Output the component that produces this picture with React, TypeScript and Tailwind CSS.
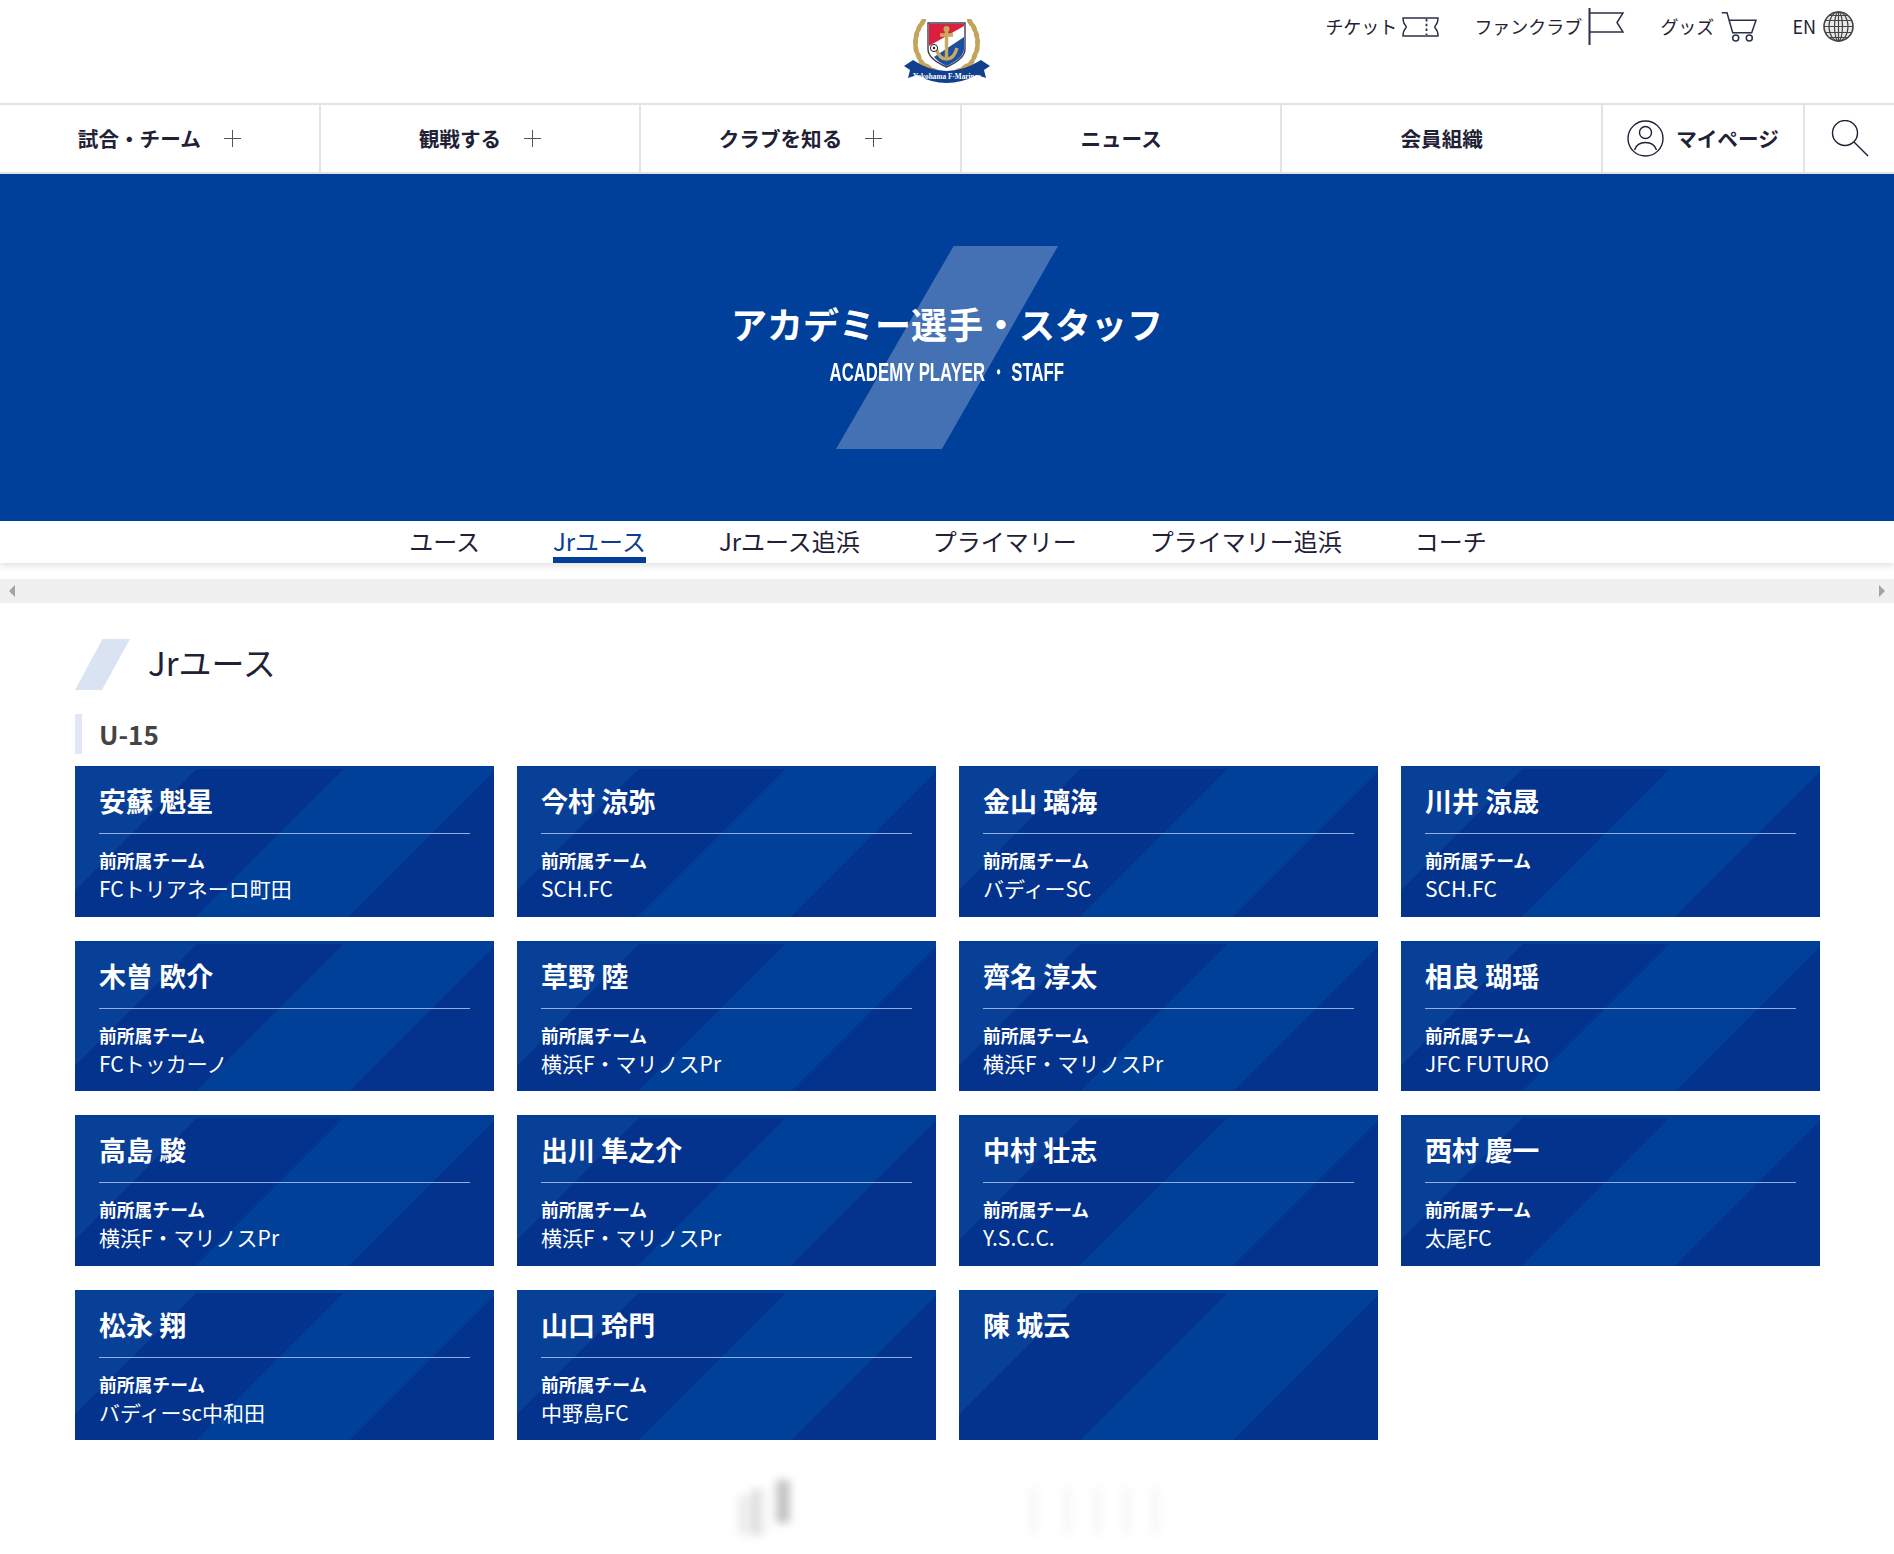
const players = [
  { name: "安蘇 魁星", team: "FCトリアネーロ町田" },
  { name: "今村 涼弥", team: "SCH.FC" },
  { name: "金山 璃海", team: "バディーSC" },
  { name: "川井 涼晟", team: "SCH.FC" },
  { name: "木曽 欧介", team: "FCトッカーノ" },
  { name: "草野 陸", team: "横浜F・マリノスPr" },
  { name: "齊名 淳太", team: "横浜F・マリノスPr" },
  { name: "相良 瑚瑶", team: "JFC FUTURO" },
  { name: "高島 駿", team: "横浜F・マリノスPr" },
  { name: "出川 隼之介", team: "横浜F・マリノスPr" },
  { name: "中村 壮志", team: "Y.S.C.C." },
  { name: "西村 慶一", team: "太尾FC" },
  { name: "松永 翔", team: "バディーsc中和田" },
  { name: "山口 玲門", team: "中野島FC" },
  { name: "陳 城云", team: "" },
];

const tabs = ["ユース", "Jrユース", "Jrユース追浜", "プライマリー", "プライマリー追浜", "コーチ"];

const navItems = [
  { label: "試合・チーム", plus: true },
  { label: "観戦する", plus: true },
  { label: "クラブを知る", plus: true },
  { label: "ニュース", plus: false },
  { label: "会員組織", plus: false },
];

const leaves = [
  [12, 44, -35], [8.5, 37, -20], [6, 30, -10], [5.5, 23, 0], [6.5, 16, 12], [9, 9, 22], [12.5, 3.500, 30],
  [18, 48, -55], [25, 52, -65], [32, 55, -75],
];

function Logo() {
  return (
    <svg width="90" height="68" viewBox="0 0 90 68" className="mt-[19px]">
      {leaves.map(([x, y, r], i) => (
        <g key={i}>
          <ellipse cx={x + 8} cy={y} rx="2.500" ry="5" fill="#c2a45c" transform={`rotate(${r} ${x + 8} ${y})`} />
          <ellipse cx={81 - x} cy={y} rx="2.500" ry="5" fill="#c2a45c" transform={`rotate(${-r} ${81 - x} ${y})`} />
        </g>
      ))}
      <path d="M26 4H63V30Q63 40 44.500 48Q26 40 26 30Z" fill="#fff" stroke="#3c3f55" strokeWidth="1.400" />
      <path d="M27 5H62V7L27 27Z" fill="#dc1f3c" />
      <path d="M62 18V30Q62 39 44.500 47Q36 43 32 38Z" fill="#1c4f9f" />
      <path d="M44.500 11V38M38 16H51M34 29Q37 40 44.500 40Q52 40 55 29" stroke="#c9a961" strokeWidth="3.400" fill="none" />
      <circle cx="44.500" cy="10" r="3" fill="#c9a961" />
      <circle cx="32" cy="29" r="3.600" fill="#fff" stroke="#222" strokeWidth="1" />
      <circle cx="32" cy="29" r="1.200" fill="#222" />
      <path d="M2 47L11 41Q44 63 79 41L88 47L82 51L84 59L75 56Q44 72 15 56L6 59L8 51Z" fill="#12408f" />
      <text
        x="45"
        y="60"
        textAnchor="middle"
        fontSize="8.500"
        fontWeight="700"
        fill="#fff"
        fontFamily="'Liberation Serif', serif"
        textLength="68"
        lengthAdjust="spacingAndGlyphs"
      >
        Yokohama F·Marinos
      </text>
    </svg>
  );
}

function Ticket() {
  return (
    <svg width="37" height="20" viewBox="0 0 37 20" fill="none" stroke="#2a3048" strokeWidth="1.400">
      <path d="M1 1H36Q36 6 33.500 8.500Q32 10 33.500 11.500Q36 14 36 19H1Q1 14 3.500 11.500Q5 10 3.500 8.500Q1 6 1 1Z" />
      <path d="M24.500 2V18" strokeDasharray="2.400 2.400" strokeWidth="1.800" />
    </svg>
  );
}

function Flag() {
  return (
    <svg width="36" height="37" viewBox="0 0 36 37" fill="none" stroke="#2a3048" strokeWidth="1.500">
      <path d="M1.500 0V37" strokeWidth="2" />
      <path d="M1.500 5H35L29 14.500L35 24H1.500" />
    </svg>
  );
}

function Cart() {
  return (
    <svg width="38" height="32" viewBox="0 0 38 32" fill="none" stroke="#2a3048" strokeWidth="1.500">
      <path d="M1.700 1.700H7L12.700 21.700H31.700L36 9.300H8.300" />
      <circle cx="15.700" cy="27" r="3" />
      <circle cx="29.300" cy="27" r="3" />
    </svg>
  );
}

function Globe() {
  return (
    <svg width="31" height="31" viewBox="0 0 31 31" fill="#e9e9e9" stroke="#444" strokeWidth="1.200">
      <circle cx="15.500" cy="15.500" r="14.500" strokeWidth="1.600" />
      <ellipse cx="15.500" cy="15.500" rx="4" ry="14.500" fill="none" />
      <ellipse cx="15.500" cy="15.500" rx="9.500" ry="14.500" fill="none" />
      <path d="M15.500 1V30M2 9.500H29M1 15.500H30M2 21.500H29M6 4.500H25M6 26.500H25" />
    </svg>
  );
}

function User() {
  return (
    <svg width="37" height="37" viewBox="0 0 37 37" fill="none" stroke="#1f2235" strokeWidth="1.400">
      <circle cx="18.500" cy="18.500" r="17.500" />
      <circle cx="18.500" cy="12.500" r="6" />
      <path d="M7.500 30Q10 22.500 18.500 22.500Q27 22.500 29.500 30" />
    </svg>
  );
}

function Search() {
  return (
    <svg width="38" height="37" viewBox="0 0 38 37" fill="none" stroke="#1f2235" strokeWidth="1.400">
      <circle cx="14" cy="13" r="12.500" />
      <path d="M23 22L37 36" />
    </svg>
  );
}

function Plus() {
  return (
    <svg width="17" height="17" viewBox="0 0 17 17" stroke="#555" strokeWidth="1">
      <path d="M8.500 0V17M0 8.500H17" />
    </svg>
  );
}

function PlayerCard({ name, team }: { name: string; team: string }) {
  return (
    <article className="h-[150.500px] bg-[linear-gradient(#013f98_3px,transparent_3px),linear-gradient(135deg,#083f97_88px,#03338c_88px,#03338c_192px,#014099_192px,#014099_300px,#03338c_300px)] px-6 text-white">
      <h3
        className={
          team
            ? "flex h-[68px] items-center border-b border-[#8fb0e0] pt-[2px] text-[27px] leading-none font-bold"
            : "flex h-[68px] items-center pt-[2px] text-[27px] leading-none font-bold"
        }
      >
        {name}
      </h3>
      {team && (
        <>
          <p className="mt-[14px] text-[17.800px] leading-6 font-bold">前所属チーム</p>
          <p className="text-[21px] leading-[33px]">{team}</p>
        </>
      )}
    </article>
  );
}

export default function App() {
  return (
    <div className="min-h-[1554px] bg-white font-['Noto_Sans_CJK_JP','Noto_Sans',sans-serif] text-[#1f2235]">
      <header className="grid h-[103px] grid-cols-[1fr_90px_1fr]">
        <div />
        <Logo />
        <div className="flex items-start justify-end pt-2 pr-10 text-[18px]">
          <a className="flex h-[37px] items-center gap-[5px]">
            <span>チケット</span>
            <Ticket />
          </a>
          <a className="ml-[35px] flex h-[37px] items-center gap-[6px]">
            <span>ファンクラブ</span>
            <Flag />
          </a>
          <a className="ml-[36px] flex h-[37px] items-center gap-[6px]">
            <span>グッズ</span>
            <Cart />
          </a>
          <a className="ml-[34px] flex h-[37px] items-center gap-[7px]">
            <span>EN</span>
            <Globe />
          </a>
        </div>
      </header>

      <nav className="flex h-[71px] border-y-2 border-[#e2e2e2] text-[20.600px] font-bold">
        {navItems.map((item) => (
          <a
            key={item.label}
            className="flex w-[320.600px] items-center justify-center gap-[23px] border-r-2 border-[#e2e4ea]"
          >
            <span>{item.label}</span>
            {item.plus && <Plus />}
          </a>
        ))}
        <a className="flex w-[202px] items-center justify-center gap-[12px] border-r-2 border-[#e2e4ea]">
          <User />
          <span>マイページ</span>
        </a>
        <a className="flex flex-1 items-center pl-[26px]">
          <Search />
        </a>
      </nav>

      <section className="relative flex h-[347px] flex-col items-center justify-center bg-[#00409a] text-white">
        <div className="absolute top-[72px] left-[836px] h-[203px] w-[222px] bg-[#4471b4] [clip-path:polygon(53%_0,100%_0,47.700%_100%,0_100%)]" />
        <h1 className="relative mt-[-9px] text-[36px] leading-[52px] font-bold">アカデミー選手・スタッフ</h1>
        <p className="relative mt-[5px] h-[36px] scale-x-[0.645] font-['Liberation_Sans',sans-serif] text-[26px] leading-[36px] font-bold whitespace-nowrap">
          ACADEMY PLAYER ・ STAFF
        </p>
      </section>

      <div className="flex h-[42px] justify-center gap-[73px] bg-white pl-[2px] shadow-[0_2px_8px_rgba(0,0,0,0.14)]">
        {tabs.map((tab) => (
          <a
            key={tab}
            className={
              tab === "Jrユース"
                ? "h-[42px] border-b-[6px] border-[#00409a] text-[24px] leading-[40px] text-[#0d3f91]"
                : "h-[42px] text-[24px] leading-[40px]"
            }
          >
            {tab}
          </a>
        ))}
      </div>

      <div className="mt-4 flex h-6 items-center justify-between bg-[#f0f0f0] px-[9px]">
        <span className="h-0 w-0 border-y-[6px] border-r-[6px] border-y-transparent border-r-[#a3a3a3]" />
        <span className="h-0 w-0 border-y-[6px] border-l-[6px] border-y-transparent border-l-[#a3a3a3]" />
      </div>

      <main className="pt-9 pl-[75px]">
        <h2 className="flex h-[51px] items-center gap-[18px] pb-[4px] text-[33px] leading-none">
          <span className="mb-[-4px] h-[51px] w-[55px] bg-[#d9e3f1] [clip-path:polygon(50%_0,100%_0,49%_100%,0_100%)]" />
          Jrユース
        </h2>
        <h3 className="mt-6 flex h-10 items-center border-l-[7px] border-[#e1e8f4] pb-[2px] pl-[17px] text-[26px] font-semibold text-[#444]">
          U-15
        </h3>
        <div className="mt-3 grid grid-cols-[repeat(4,419px)] gap-x-[23px] gap-y-[24px]">
          {players.map((player) => (
            <PlayerCard key={player.name} name={player.name} team={player.team} />
          ))}
        </div>
      </main>

      <div className="mt-[40px] flex h-[55px] items-end pl-[738px] blur-[4px]">
        <span className="h-[40px] w-[12px] bg-[#ececec]" />
        <span className="ml-[2px] h-[46px] w-[8px] bg-[#d8d8d8]" />
        <span className="ml-[2px] h-[46px] w-[6px] bg-[#f4f4f4]" />
        <span className="mb-[12px] ml-[8px] h-[43px] w-[14px] bg-[#c4c4c4]" />
        <span className="ml-[240px] h-[48px] w-[6px] bg-[#f3f3f3]" />
        <span className="ml-[28px] h-[48px] w-[6px] bg-[#f3f3f3]" />
        <span className="ml-[24px] h-[48px] w-[6px] bg-[#f3f3f3]" />
        <span className="ml-[24px] h-[48px] w-[6px] bg-[#f3f3f3]" />
        <span className="ml-[22px] h-[48px] w-[6px] bg-[#f3f3f3]" />
      </div>
    </div>
  );
}
